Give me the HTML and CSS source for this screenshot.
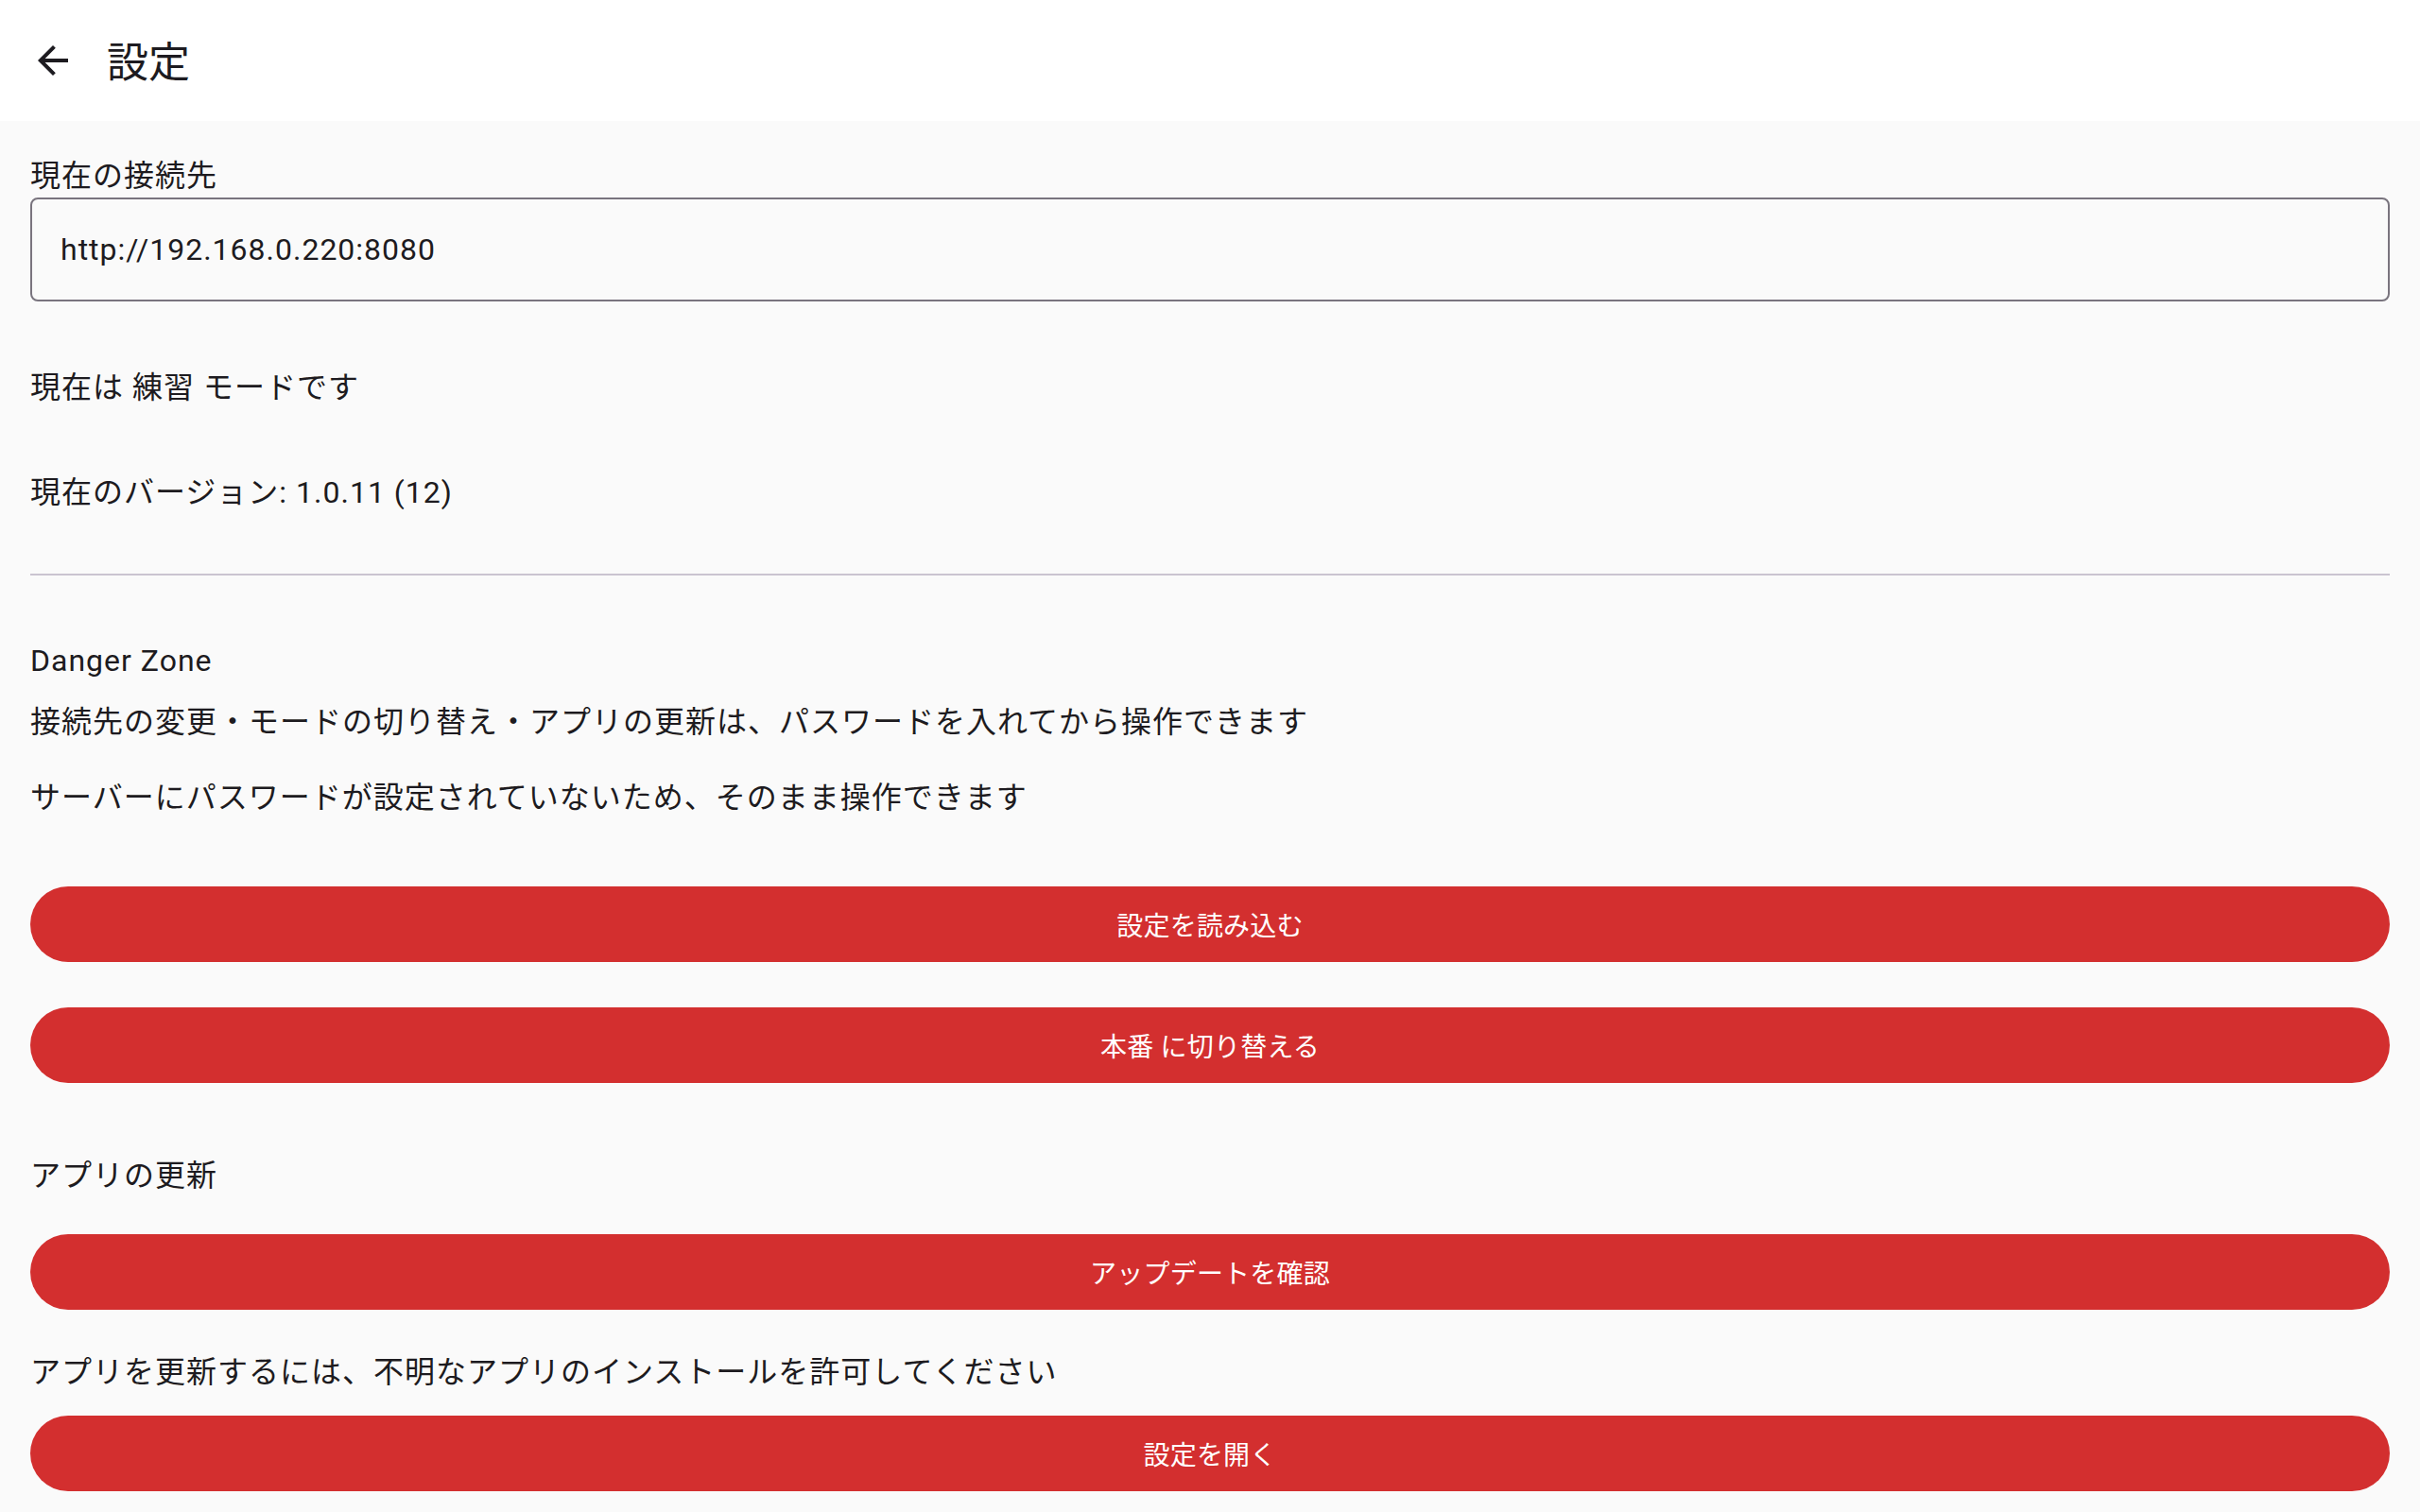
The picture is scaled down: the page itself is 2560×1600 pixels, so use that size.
FILE: index.html
```html
<!DOCTYPE html>
<html lang="ja">
<head>
    <meta charset="UTF-8">
    <meta name="viewport" content="width=device-width, initial-scale=1.0">
    <title>設定</title>
    <link rel="stylesheet" href="styles.css">
</head>
<body>
    <header class="app-bar">
        <button class="back-button" aria-label="戻る">
            <svg width="48" height="48" viewBox="0 0 24 24">
                <path d="M20 11H7.83l5.59-5.59L12 4l-8 8 8 8 1.41-1.41L7.83 13H20v-2z" fill="#1d1b20"/>
            </svg>
        </button>
        <h1 class="app-title">設定</h1>
    </header>

    <main class="content">
        <p class="field-label">現在の接続先</p>
        <div class="field">http://192.168.0.220:8080</div>

        <p class="text mode-text">現在は 練習 モードです</p>
        <p class="text version-text">現在のバージョン: 1.0.11 (12)</p>

        <hr class="divider">

        <p class="text danger-title">Danger Zone</p>
        <p class="text danger-note">接続先の変更・モードの切り替え・アプリの更新は、パスワードを入れてから操作できます</p>
        <p class="text password-note">サーバーにパスワードが設定されていないため、そのまま操作できます</p>

        <button class="danger-button load-button">設定を読み込む</button>
        <button class="danger-button switch-button">本番 に切り替える</button>

        <p class="text update-title">アプリの更新</p>
        <button class="danger-button update-button">アップデートを確認</button>
        <p class="text install-note">アプリを更新するには、不明なアプリのインストールを許可してください</p>
        <button class="danger-button settings-button">設定を開く</button>
    </main>
</body>
</html>
```

FILE: styles.css
```css
body {
    margin: 0;
    background-color: #fafafa;
    color: #1d1b20;
    font-family: Roboto, "Noto Sans CJK JP", sans-serif;
}

.app-bar {
    height: 128px;
    box-sizing: border-box;
    padding: 0 32px;
    background-color: #ffffff;
    display: flex;
    align-items: center;
}

.back-button {
    width: 48px;
    height: 48px;
    padding: 0;
    border: none;
    background: none;
    display: flex;
}

.app-title {
    margin: 6px 0 0 33px;
    font-size: 44px;
    font-weight: 400;
    line-height: 56px;
}

.content {
    padding: 36px 32px 0;
}

.text,
.field-label {
    margin: 0;
    font-size: 32px;
    line-height: 48px;
    letter-spacing: 1px;
}

.field-label {
    line-height: 44px;
    margin-bottom: 1px;
}

.field {
    height: 110px;
    box-sizing: border-box;
    border: 2px solid #79747e;
    border-radius: 8px;
    padding: 0 30px;
    display: flex;
    align-items: center;
    font-size: 32px;
    letter-spacing: 1px;
}

.mode-text {
    margin-top: 67px;
}

.version-text {
    margin-top: 63px;
}

.divider {
    margin: 62px 0 0;
    border: none;
    height: 2px;
    background-color: #cac4d0;
}

.danger-title {
    margin-top: 66px;
}

.danger-note {
    margin-top: 17px;
}

.password-note {
    margin-top: 32px;
}

.danger-button {
    display: block;
    width: 100%;
    height: 80px;
    border: none;
    border-radius: 40px;
    background-color: #d32f2f;
    color: #ffffff;
    font-family: inherit;
    font-size: 28px;
    letter-spacing: 0.2px;
    cursor: pointer;
}

.load-button {
    margin-top: 70px;
}

.switch-button {
    margin-top: 48px;
}

.update-title {
    margin-top: 74px;
}

.update-button {
    margin-top: 38px;
}

.install-note {
    margin-top: 42px;
}

.settings-button {
    margin-top: 22px;
}
```
